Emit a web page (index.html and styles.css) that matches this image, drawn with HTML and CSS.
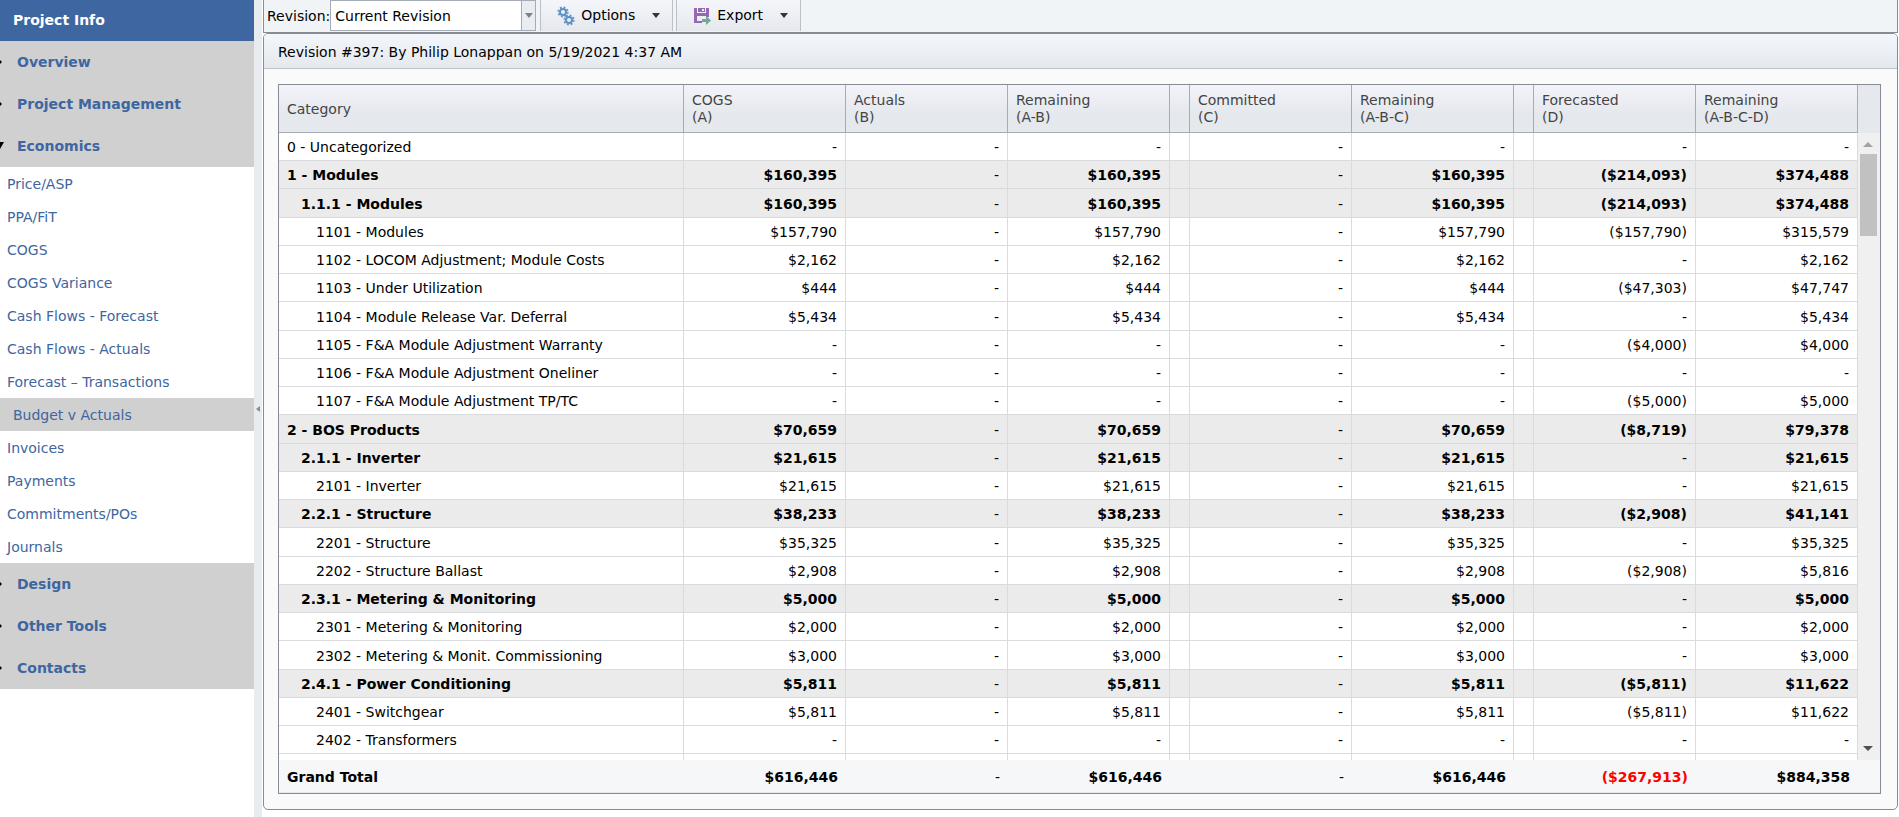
FILE: index.html
```html
<!DOCTYPE html>
<html lang="en">
<head>
    <meta charset="UTF-8">
    <meta name="viewport" content="width=device-width, initial-scale=1.0">
    <title>Budget v Actuals</title>
    <link rel="stylesheet" href="styles.css">
</head>
<body>
    <nav class="sidebar">
        <h1 class="sidebar-title">Project Info</h1>
        <a class="group" href="#">Overview</a>
        <a class="group" href="#">Project Management</a>
        <a class="group open" href="#">Economics</a>
        <ul class="links">
            <li><a href="#">Price/ASP</a></li>
            <li><a href="#">PPA/FiT</a></li>
            <li><a href="#">COGS</a></li>
            <li><a href="#">COGS Variance</a></li>
            <li><a href="#">Cash Flows - Forecast</a></li>
            <li><a href="#">Cash Flows - Actuals</a></li>
            <li><a href="#">Forecast – Transactions</a></li>
            <li><a class="selected" href="#">Budget v Actuals</a></li>
            <li><a href="#">Invoices</a></li>
            <li><a href="#">Payments</a></li>
            <li><a href="#">Commitments/POs</a></li>
            <li><a href="#">Journals</a></li>
        </ul>
        <a class="group" href="#">Design</a>
        <a class="group" href="#">Other Tools</a>
        <a class="group" href="#">Contacts</a>
    </nav>
    <div class="splitter"><span class="splitter-arrow"></span></div>
    <main class="content">
        <div class="toolbar">
            <label for="revision">Revision:</label>
            <div class="combo">
                <select id="revision">
                    <option>Current Revision</option>
                </select>
                <span class="combo-button"><span class="arrow small"></span></span>
            </div>
            <button class="tool" type="button">
                <svg class="icon" viewBox="0 0 18 20">
                    <g fill="none" stroke="#5b92c8">
                        <circle cx="6" cy="6" r="3" stroke-width="2"/>
                        <circle cx="6" cy="6" r="4.6" stroke-width="2" stroke-dasharray="1.8 1.81"/>
                        <circle cx="12" cy="14" r="3" stroke-width="2"/>
                        <circle cx="12" cy="14" r="4.6" stroke-width="2" stroke-dasharray="1.8 1.81"/>
                    </g>
                </svg>
                Options
                <span class="arrow"></span>
            </button>
            <button class="tool" type="button">
                <svg class="icon" viewBox="0 0 18 20">
                    <path fill="#9668b4" fill-rule="evenodd" d="M1 2h3v5h9V2h3v9h-3v-1H4v5h5v2H1z M5 2h7v4H5z M9 3v2h2V3z"/>
                    <path fill="#6fa895" d="M9 13h4v-3l5 4.500-5 4.500v-3H9z"/>
                </svg>
                Export
                <span class="arrow"></span>
            </button>
        </div>
        <section class="panel">
            <h2 class="panel-title">Revision #397: By Philip Lonappan on 5/19/2021 4:37 AM</h2>
            <div class="grid">
                <div class="grid-head">
                    <table>
                        <colgroup><col><col class="num"><col class="num"><col class="num"><col class="gap"><col class="num"><col class="num"><col class="gap"><col class="num"><col class="num"></colgroup>
                        <thead>
                            <tr>
                                <th>Category</th>
                                <th>COGS<br>(A)</th>
                                <th>Actuals<br>(B)</th>
                                <th>Remaining<br>(A-B)</th>
                                <th></th>
                                <th>Committed<br>(C)</th>
                                <th>Remaining<br>(A-B-C)</th>
                                <th></th>
                                <th>Forecasted<br>(D)</th>
                                <th>Remaining<br>(A-B-C-D)</th>
                            </tr>
                        </thead>
                    </table>
                </div>
                <div class="grid-body">
                    <table>
                        <colgroup><col><col class="num"><col class="num"><col class="num"><col class="gap"><col class="num"><col class="num"><col class="gap"><col class="num"><col class="num"></colgroup>
                        <tbody id="rows"></tbody>
                    </table>
                    <div class="scrollbar">
                        <span class="scroll-up"></span>
                        <span class="scroll-thumb"></span>
                        <span class="scroll-down"></span>
                    </div>
                </div>
                <div class="grid-foot">
                    <table>
                        <colgroup><col><col class="num"><col class="num"><col class="num"><col class="gap"><col class="num"><col class="num"><col class="gap"><col class="num"><col class="num"></colgroup>
                        <tbody>
                            <tr>
                                <td>Grand Total</td>
                                <td>$616,446</td>
                                <td class="dash">-</td>
                                <td>$616,446</td>
                                <td></td>
                                <td class="dash">-</td>
                                <td>$616,446</td>
                                <td></td>
                                <td class="negative">($267,913)</td>
                                <td>$884,358</td>
                            </tr>
                        </tbody>
                    </table>
                </div>
            </div>
        </section>
    </main>
    <script src="script.js"></script>
</body>
</html>
```
FILE: styles.css
```css
* {
    box-sizing: border-box;
}

body {
    display: flex;
    height: 100vh;
    margin: 0;
    overflow: hidden;
    background: #fff;
    color: #000;
    font-family: Verdana, "DejaVu Sans", sans-serif;
    font-size: 14px;
    line-height: 17px;
}

/* Sidebar */
.sidebar {
    flex: 0 0 254px;
}

.sidebar-title {
    margin: 0;
    padding: 12px 13px;
    background: #3e66a0;
    color: #fff;
    font-size: 14px;
}

.sidebar a {
    display: block;
    color: #3e66a0;
    text-decoration: none;
}

.group {
    position: relative;
    height: 42px;
    padding: 13px 17px 12px;
    background: #d0d0d0;
    font-weight: bold;
}

.group::before {
    content: "";
    position: absolute;
    left: -2px;
    top: 17px;
    border: solid transparent;
    border-width: 4px 0 4px 4px;
    border-left-color: #000;
}

.group.open::before {
    left: -4px;
    border-width: 7px 4px 0;
    border-top-color: #000;
}

.links {
    margin: 0;
    padding: 0;
    list-style: none;
}

.links a {
    height: 33px;
    padding: 9px 7px 7px;
}

.links .selected {
    padding-left: 13px;
    background: #d0d0d0;
}

.splitter {
    display: flex;
    align-items: center;
    justify-content: center;
    flex: 0 0 8px;
    margin-right: 1px;
    background: #e8ebf0;
}

.splitter-arrow {
    border: solid transparent;
    border-width: 3px 4px 3px 0;
    border-right-color: #8a8e94;
}

/* Toolbar */
.content {
    display: flex;
    flex: 1;
    flex-direction: column;
    min-width: 0;
    padding: 0 1px 7px 0;
}

.toolbar {
    display: flex;
    height: 33px;
    padding: 0 3px 1px;
    border: 1px solid #868b95;
    border-top: 0;
    background: #f0f4f7;
}

.toolbar label {
    padding-top: 8px;
}

.combo {
    display: flex;
    width: 206px;
    height: 31px;
    margin-right: 4px;
    border: 1px solid #a5acb5;
    background: #fff;
}

.combo select {
    flex: 1;
    padding: 2px 4px 0;
    border: 0;
    background: none;
    color: #000;
    font: inherit;
    appearance: none;
}

.combo-button {
    display: flex;
    align-items: center;
    justify-content: center;
    width: 14px;
    border-left: 1px solid #a5acb5;
    background: #e9edf2;
}

.tool {
    display: flex;
    align-items: center;
    height: 31px;
    margin-right: 3px;
    padding: 0 12px 0 16px;
    border: solid #bcc1c8;
    border-width: 0 1px;
    background: linear-gradient(#f4f6fa, #e5e8ed);
    color: #000;
    font: inherit;
}

.icon {
    width: 18px;
    height: 20px;
    margin-right: 6px;
}

.arrow {
    margin-left: 17px;
    border: solid transparent;
    border-width: 5px 4px 0;
    border-top-color: #333;
}

.arrow.small {
    margin: 0;
    border-top-color: #7d828a;
}

/* Panel */
.panel {
    display: flex;
    flex: 1;
    flex-direction: column;
    min-height: 0;
    border: 1px solid #868b95;
    border-radius: 5px;
    background: #fafafa;
}

.panel-title {
    margin: 0;
    padding: 10px 14px 7px;
    border-bottom: 1px solid #bcc1c8;
    border-radius: 4px 4px 0 0;
    background: linear-gradient(#f3f6fa, #e5e8ed);
    font-size: 14px;
    font-weight: normal;
}

.grid {
    display: flex;
    flex: 1;
    flex-direction: column;
    min-height: 0;
    margin: 15px 16px 15px 14px;
    border: 1px solid #868b95;
}

table {
    width: 100%;
    table-layout: fixed;
    border-collapse: separate;
    border-spacing: 0;
}

.num {
    width: 162px;
}

.gap {
    width: 20px;
}

.grid-head {
    padding-right: 22px;
    background: #e5e8ed;
}

.grid-head th {
    height: 48px;
    padding: 1px 8px 0;
    border-right: 1px solid #a5acb5;
    border-bottom: 1px solid #a5acb5;
    background: linear-gradient(#f3f4f9, #e5e8ed 60%);
    color: #444;
    font-weight: normal;
    text-align: left;
}

.grid-body {
    display: flex;
    flex: 1;
    align-items: flex-start;
    min-height: 0;
    overflow: hidden;
    background: #fff;
}

.grid-body table {
    flex: 1;
}

.grid-body td {
    height: 28px;
    padding: 2px 8px 0;
    border-right: 1px solid #d9dbde;
    border-bottom: 1px solid #d9dbde;
    text-align: right;
    white-space: nowrap;
}

.grid-body tr:nth-child(4n+3) td {
    height: 29px;
}

.grid-body td:first-child,
.grid-foot td:first-child {
    text-align: left;
}

.summary {
    background: #ebebeb;
    font-weight: bold;
}

.grid-body .level-1 td:first-child {
    padding-left: 22px;
}

.grid-body .level-2 td:first-child {
    padding-left: 37px;
}

.dash {
    font-weight: normal;
}

.scrollbar {
    display: flex;
    flex: 0 0 22px;
    flex-direction: column;
    align-items: center;
    align-self: stretch;
    padding: 9px 2px 9px 0;
    background: #f0f0f0;
}

.scroll-up {
    border: solid transparent;
    border-width: 0 5px 5px;
    border-bottom-color: #a3a3a3;
}

.scroll-thumb {
    width: 17px;
    height: 82px;
    margin-top: 7px;
    background: #c1c1c1;
}

.scroll-down {
    margin-top: auto;
    border: solid transparent;
    border-width: 5px 5px 0;
    border-top-color: #505050;
}

.grid-foot {
    padding-right: 22px;
    border-bottom: 1px solid #e5e8ed;
    background: #f5f7f9;
    font-weight: bold;
}

.grid-foot td {
    height: 32px;
    padding: 2px 8px 0;
    text-align: right;
}

.negative {
    color: #f00;
}
```
FILE: script.js
```js
// level, category, COGS, actuals, remaining, committed, remaining, forecasted, remaining
const rows = [
    [0, '0 - Uncategorized', '-', '-', '-', '-', '-', '-', '-'],
    [0, '1 - Modules', '$160,395', '-', '$160,395', '-', '$160,395', '($214,093)', '$374,488'],
    [1, '1.1.1 - Modules', '$160,395', '-', '$160,395', '-', '$160,395', '($214,093)', '$374,488'],
    [2, '1101 - Modules', '$157,790', '-', '$157,790', '-', '$157,790', '($157,790)', '$315,579'],
    [2, '1102 - LOCOM Adjustment; Module Costs', '$2,162', '-', '$2,162', '-', '$2,162', '-', '$2,162'],
    [2, '1103 - Under Utilization', '$444', '-', '$444', '-', '$444', '($47,303)', '$47,747'],
    [2, '1104 - Module Release Var. Deferral', '$5,434', '-', '$5,434', '-', '$5,434', '-', '$5,434'],
    [2, '1105 - F&A Module Adjustment Warranty', '-', '-', '-', '-', '-', '($4,000)', '$4,000'],
    [2, '1106 - F&A Module Adjustment Oneliner', '-', '-', '-', '-', '-', '-', '-'],
    [2, '1107 - F&A Module Adjustment TP/TC', '-', '-', '-', '-', '-', '($5,000)', '$5,000'],
    [0, '2 - BOS Products', '$70,659', '-', '$70,659', '-', '$70,659', '($8,719)', '$79,378'],
    [1, '2.1.1 - Inverter', '$21,615', '-', '$21,615', '-', '$21,615', '-', '$21,615'],
    [2, '2101 - Inverter', '$21,615', '-', '$21,615', '-', '$21,615', '-', '$21,615'],
    [1, '2.2.1 - Structure', '$38,233', '-', '$38,233', '-', '$38,233', '($2,908)', '$41,141'],
    [2, '2201 - Structure', '$35,325', '-', '$35,325', '-', '$35,325', '-', '$35,325'],
    [2, '2202 - Structure Ballast', '$2,908', '-', '$2,908', '-', '$2,908', '($2,908)', '$5,816'],
    [1, '2.3.1 - Metering & Monitoring', '$5,000', '-', '$5,000', '-', '$5,000', '-', '$5,000'],
    [2, '2301 - Metering & Monitoring', '$2,000', '-', '$2,000', '-', '$2,000', '-', '$2,000'],
    [2, '2302 - Metering & Monit. Commissioning', '$3,000', '-', '$3,000', '-', '$3,000', '-', '$3,000'],
    [1, '2.4.1 - Power Conditioning', '$5,811', '-', '$5,811', '-', '$5,811', '($5,811)', '$11,622'],
    [2, '2401 - Switchgear', '$5,811', '-', '$5,811', '-', '$5,811', '($5,811)', '$11,622'],
    [2, '2402 - Transformers', '-', '-', '-', '-', '-', '-', '-'],
    [2, '', '', '', '', '', '', '', '']
];

const tbody = document.getElementById('rows');

rows.forEach(([level, ...cells], index) => {
    const tr = document.createElement('tr');
    tr.className = 'level-' + level;
    if (level < 2 && index > 0) {
        tr.classList.add('summary');
    }
    // empty spacer columns before Forecasted and Committed
    cells.splice(6, 0, '');
    cells.splice(4, 0, '');
    cells.forEach(text => {
        const td = document.createElement('td');
        td.textContent = text;
        if (text === '-') {
            td.className = 'dash';
        }
        tr.appendChild(td);
    });
    tbody.appendChild(tr);
});
```
